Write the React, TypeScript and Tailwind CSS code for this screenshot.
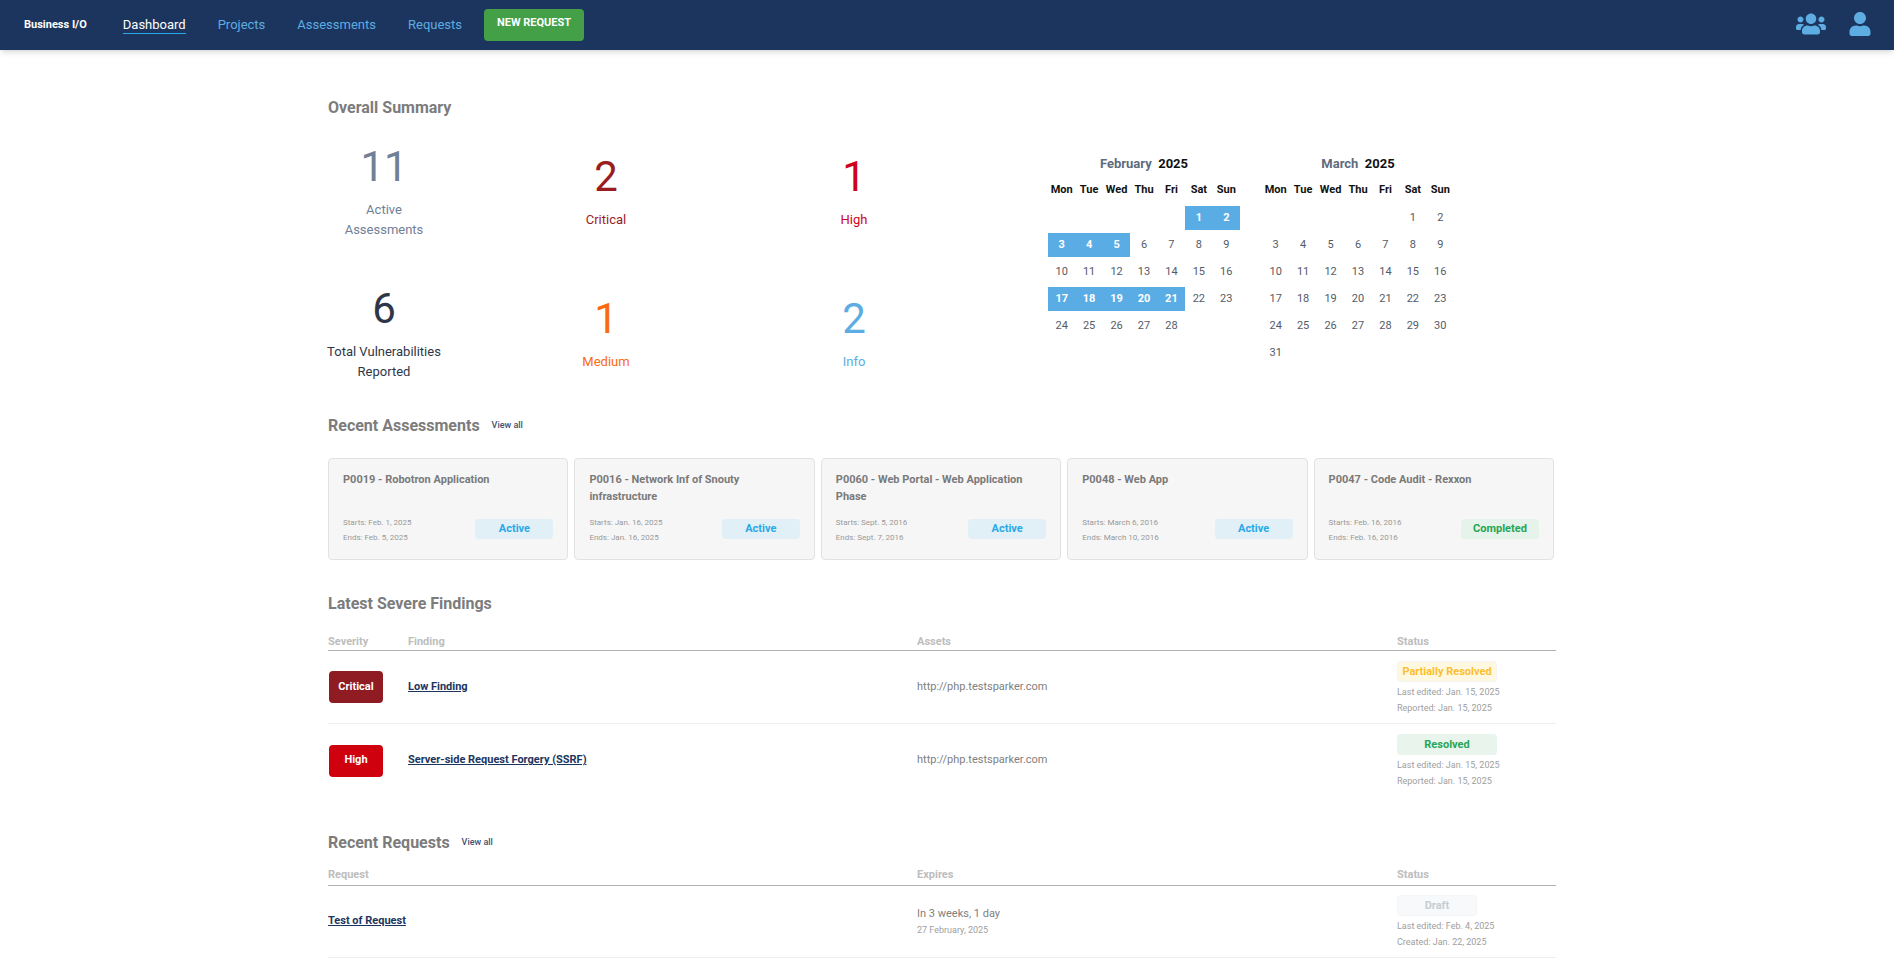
import { FaUser, FaUsers } from "react-icons/fa";

const navLinks = ["Projects", "Assessments", "Requests"];

const assessments = [
  { title: "P0019 - Robotron Application", starts: "Feb. 1, 2025", ends: "Feb. 5, 2025", status: "Active" },
  { title: "P0016 - Network Inf of Snouty infrastructure", starts: "Jan. 16, 2025", ends: "Jan. 16, 2025", status: "Active" },
  { title: "P0060 - Web Portal - Web Application Phase", starts: "Sept. 5, 2016", ends: "Sept. 7, 2016", status: "Active" },
  { title: "P0048 - Web App", starts: "March 6, 2016", ends: "March 10, 2016", status: "Active" },
  { title: "P0047 - Code Audit - Rexxon", starts: "Feb. 16, 2016", ends: "Feb. 16, 2016", status: "Completed" },
];

const weekdays = ["Mon", "Tue", "Wed", "Thu", "Fri", "Sat", "Sun"];

function Stat({ value, label, color }: { value: string; label: string; color: string }) {
  return (
    <div className={`flex flex-col items-center justify-center text-center ${color}`}>
      <div className="mb-3 text-[42px] leading-none">{value}</div>
      <div className="text-[13px] leading-5">{label}</div>
    </div>
  );
}

function SectionTitle({ title, viewAll }: { title: string; viewAll?: boolean }) {
  return (
    <div className="flex items-center gap-3">
      <h2 className="text-base leading-6 font-bold text-[#7c7c7c]">{title}</h2>
      {viewAll && <a className="text-[9px] font-medium text-[#3f4f72]">View all</a>}
    </div>
  );
}

function Month({ name, offset, days, selected }: { name: string; offset: number; days: number; selected: number[] }) {
  return (
    <div className="mt-2 w-48">
      <div className="mb-1 text-center text-[13px] leading-5 font-bold text-[#5f6b7e]">
        {name}&nbsp; <span className="text-[#111]">2025</span>
      </div>
      <div className="grid grid-cols-7 gap-y-0.75 text-center text-[11px] leading-6">
        {weekdays.map((d) => (
          <div key={d} className="pb-px font-bold text-[#111]">
            {d}
          </div>
        ))}
        {Array.from({ length: offset }, (_, i) => (
          <div key={i} />
        ))}
        {Array.from({ length: days }, (_, i) => {
          const day = i + 1;
          return (
            <div key={day} className={selected.includes(day) ? "bg-[#5aace4] font-bold text-white" : "text-[#555b66]"}>
              {day}
            </div>
          );
        })}
      </div>
    </div>
  );
}

function StatusBlock({ label, width, badge, lines }: { label: string; width: string; badge: string; lines: string[] }) {
  return (
    <div className="pt-0.5">
      <div className={`rounded border text-center text-[11px] leading-4.75 font-bold ${width} ${badge}`}>{label}</div>
      <div className="mt-0.5 text-[9px] leading-4 text-[#9e9e9e]">
        {lines.map((l) => (
          <div key={l}>{l}</div>
        ))}
      </div>
    </div>
  );
}

function FindingRow({ severity, color, finding, status, badge, border }: { severity: string; color: string; finding: string; status: string; badge: string; border?: boolean }) {
  return (
    <div className={`grid h-18.25 grid-cols-[80px_509px_480px_1fr] items-center ${border ? "border-b border-[#eeeeee]" : ""}`}>
      <div className={`ml-px flex h-8 w-13.5 items-center justify-center rounded-sm text-[11px] font-bold text-white ${color}`}>{severity}</div>
      <a className="text-[11px] font-bold text-[#1c355e] underline">{finding}</a>
      <div className="text-[11px] text-[#808080]">http://php.testsparker.com</div>
      <StatusBlock label={status} width="w-25" badge={badge} lines={["Last edited: Jan. 15, 2025", "Reported: Jan. 15, 2025"]} />
    </div>
  );
}

export default function App() {
  return (
    <div className="h-screen overflow-hidden bg-white font-['Roboto',sans-serif]">
      <nav className="flex h-12.5 items-center bg-[#1c355e] pr-5.5 pl-6 shadow-md">
        <span className="mr-9 text-[11px] font-bold text-white">Business I/O</span>
        <a className="mr-8 border-b border-[#29a9e8] text-[13px] leading-4 text-white">Dashboard</a>
        {navLinks.map((l) => (
          <a key={l} className="mr-8 text-[13px] text-[#5dade2]">
            {l}
          </a>
        ))}
        <button className="-ml-2.5 h-8 w-25 rounded-sm bg-[#43a047] pb-1 text-[11px] font-bold text-white">NEW REQUEST</button>
        <div className="-mt-0.5 ml-auto flex items-center gap-5.5 text-[#5dade2]">
          <FaUsers className="h-6 w-7.5" />
          <FaUser className="h-6 w-6" />
        </div>
      </nav>

      <main className="ml-82 w-307 pt-11.5">
        <SectionTitle title="Overall Summary" />
        <div className="mt-6.5 flex">
          <div className="-ml-0.5 grid w-153 grid-cols-[116px_328px_168px] gap-y-12">
            <Stat value="11" label="Active Assessments" color="text-[#718096]" />
            <Stat value="2" label="Critical" color="text-[#9b1c1f]" />
            <Stat value="1" label="High" color="text-[#d0021b]" />
            <Stat value="6" label="Total Vulnerabilities Reported" color="text-[#2d3748]" />
            <Stat value="1" label="Medium" color="text-[#fa6a0f]" />
            <Stat value="2" label="Info" color="text-[#5dade2]" />
          </div>
          <div className="ml-27.5 flex gap-5.5">
            <Month name="February" offset={5} days={28} selected={[1, 2, 3, 4, 5, 17, 18, 19, 20, 21]} />
            <Month name="March" offset={5} days={31} selected={[]} />
          </div>
        </div>

        <div className="mt-8">
          <SectionTitle title="Recent Assessments" viewAll />
          <div className="mt-5 mr-0.5 grid grid-cols-5 gap-1.5">
            {assessments.map((a) => (
              <div key={a.title} className="flex h-25.5 flex-col rounded border border-[#e2e2e2] bg-[#f6f6f6] px-3.5 pt-3">
                <div className="h-9 text-[11px] leading-4.25 font-bold text-[#7a7a7a]">{a.title}</div>
                <div className="mt-auto mb-3.5 flex items-end justify-between">
                  <div className="text-[8px] leading-3.75 text-[#999999]">
                    <div>Starts: {a.starts}</div>
                    <div>Ends: {a.ends}</div>
                  </div>
                  <div
                    className={`mb-1.5 w-19.5 rounded-sm text-center text-[11px] leading-5 font-bold ${
                      a.status === "Active" ? "bg-[#e1eff6] text-[#29a9e8]" : "bg-[#e5f3ea] text-[#27a555]"
                    }`}
                  >
                    {a.status}
                  </div>
                </div>
              </div>
            ))}
          </div>
        </div>

        <div className="mt-8">
          <SectionTitle title="Latest Severe Findings" />
          <div className="mt-4.5 grid grid-cols-[80px_509px_480px_1fr] border-b border-[#b0b0b0] text-[11px] leading-4 font-bold text-[#bdbdbd]">
            <div>Severity</div>
            <div>Finding</div>
            <div>Assets</div>
            <div>Status</div>
          </div>
          <FindingRow severity="Critical" color="bg-[#8f1c22]" finding="Low Finding" status="Partially Resolved" badge="border-gray-100 bg-[#fff8e1] text-[#fbc02d]" border />
          <FindingRow severity="High" color="bg-[#d0010f]" finding="Server-side Request Forgery (SSRF)" status="Resolved" badge="border-transparent bg-[#e8f4ec] text-[#27a555]" />
        </div>

        <div className="mt-8.5">
          <SectionTitle title="Recent Requests" viewAll />
          <div className="mt-3 grid grid-cols-[589px_480px_1fr] border-b border-[#b0b0b0] pb-0.5 text-[11px] leading-4 font-bold text-[#bdbdbd]">
            <div>Request</div>
            <div>Expires</div>
            <div>Status</div>
          </div>
          <div className="grid h-18 grid-cols-[589px_480px_1fr] items-center border-b border-[#eeeeee]">
            <a className="text-[11px] font-bold text-[#1c355e] underline">Test of Request</a>
            <div>
              <div className="text-[11px] leading-4 text-[#808080]">In 3 weeks, 1 day</div>
              <div className="text-[9px] leading-4 text-[#9e9e9e]">27 February, 2025</div>
            </div>
            <StatusBlock label="Draft" width="w-20" badge="border-gray-100 bg-[#f8f9fa] text-[#c5cdd3]" lines={["Last edited: Feb. 4, 2025", "Created: Jan. 22, 2025"]} />
          </div>
        </div>
      </main>
    </div>
  );
}
